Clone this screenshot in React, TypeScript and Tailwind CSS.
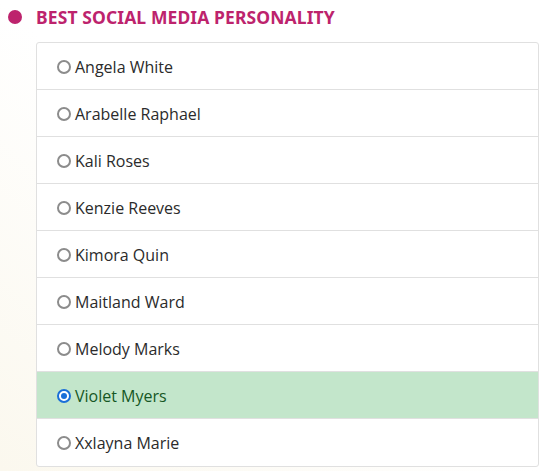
const names = [
  'Angela White',
  'Arabelle Raphael',
  'Kali Roses',
  'Kenzie Reeves',
  'Kimora Quin',
  'Maitland Ward',
  'Melody Marks',
  'Violet Myers',
  'Xxlayna Marie',
]

const SELECTED = 'Violet Myers'

function Radio({ checked }: { checked: boolean }) {
  if (checked) {
    return (
      <span className="flex h-[14px] w-[14px] items-center justify-center rounded-full border-[2px] border-[#1a6fd8] bg-white">
        <span className="h-[6px] w-[6px] rounded-full bg-[#1a6fd8]" />
      </span>
    )
  }
  return <span className="h-[14px] w-[14px] rounded-full border-[2px] border-[#8c8c8c] bg-white" />
}

export default function App() {
  return (
    <div className="h-[471px] w-[542px] overflow-hidden bg-gradient-to-tr from-[#fbf8ee] via-white to-white">
      <div className="flex h-[34px] items-center pl-[8px]">
        <span className="h-[14px] w-[14px] rounded-full bg-[#bd236d]" />
        <span
          className="ml-[14px] mt-[1px] text-[17.5px] font-bold tracking-[0.1px] text-[#bd236d]"
          style={{ fontFamily: '"Noto Sans", sans-serif' }}
        >
          BEST SOCIAL MEDIA PERSONALITY
        </span>
      </div>
      <div className="ml-[36px] mr-[3px] mt-[8px] overflow-hidden rounded-[3px] border border-[#e0e0e0] bg-white">
        {names.map((n, i) => {
          const on = n === SELECTED
          return (
            <div
              key={n}
              className={
                'flex h-[47px] items-center gap-[4px] pl-[20px] pt-[1px] ' +
                (i < names.length - 1 ? 'border-b border-[#e0e0e0] ' : '') +
                (on ? 'bg-[#c3e6cb] text-[#155724]' : 'text-[#2b2b2b]')
              }
              style={{ fontFamily: '"Open Sans", sans-serif' }}
            >
              <Radio checked={on} />
              <span className="text-[16px]">{n}</span>
            </div>
          )
        })}
      </div>
    </div>
  )
}
